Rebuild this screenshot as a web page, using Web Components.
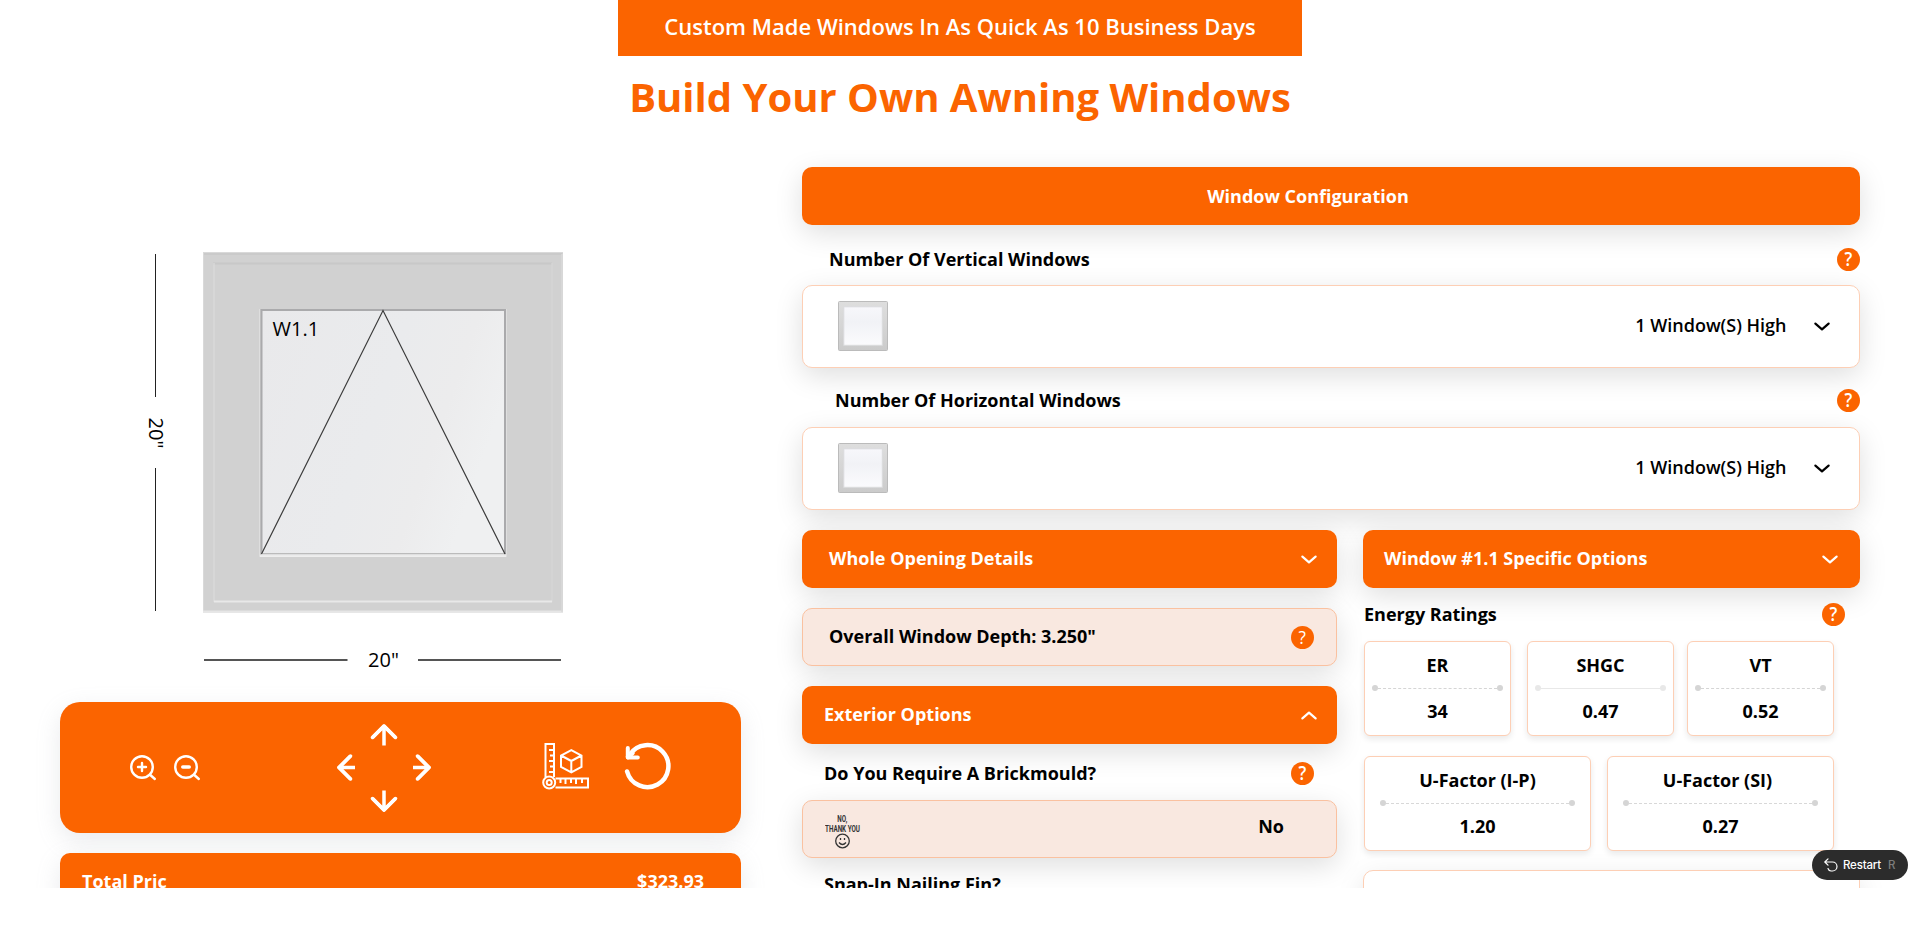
<!DOCTYPE html>
<html lang="en"><head><meta charset="utf-8"><title>Build Your Own Awning Windows</title>
<style>html,body{margin:0;background:#fff;height:930px;overflow:hidden}body{font-family:"Open Sans","Noto Sans",sans-serif}</style></head>
<body><awning-app></awning-app>
<script>
function define(name, html){
  customElements.define(name, class extends HTMLElement{
    constructor(){
      super();
      const t=document.createElement('template');
      t.innerHTML=html.replace(/\{(\w+)\}/g,(m,k)=>this.getAttribute(k)||'');
      this.attachShadow({mode:'open'}).appendChild(t.content.cloneNode(true));
    }
  });
}
define('help-dot',`<style>:host{display:flex;width:23px;height:23px;border-radius:50%;background:#fb6400;color:#fff;align-items:center;justify-content:center;font-size:19px;font-weight:600;line-height:23px;flex:none}b{font-weight:inherit;transform:scaleX(.9)}</style><b>?</b>`);
define('chevron-icon',`<style>:host{display:block;width:16px;height:9px;flex:none}:host([up]){transform:rotate(180deg)}svg{display:block}</style>
<svg width="16" height="9" fill="none" stroke="currentColor" stroke-width="2.200" stroke-linecap="round" stroke-linejoin="round"><path d="M1.4 1.600 8 7.400 14.600 1.600"/></svg>`);
define('accordion-bar',`<style>:host{display:flex;box-sizing:border-box;height:58px;border-radius:10px;background:#fb6400;color:#fff;font-weight:700;font-size:18px;line-height:24px;align-items:center;justify-content:space-between;box-shadow:0 8px 28px rgba(0,0,0,.13)}:host([center]){justify-content:center}:host([soft]){background:#f9e8e0;border:1px solid #fac1a0;color:#000}::slotted(span){padding-bottom:2px}</style><slot></slot>`);
define('window-thumb',`<style>:host{display:block;margin-bottom:1px}svg{display:block}</style><svg width="50" height="50"><defs><linearGradient id="f" x2="0" y2="1"><stop stop-color="#dedede"/><stop offset="1" stop-color="#cbcbcb"/></linearGradient><linearGradient id="g" x2="0" y2="1"><stop stop-color="#f7f7fb"/><stop offset=".4" stop-color="#f1f2f6"/><stop offset="1" stop-color="#fbfbfd"/></linearGradient></defs><rect x=".5" y=".5" width="49" height="49" rx="1" fill="url(#f)" stroke="#bbb"/><rect x="5.800" y="5.800" width="38.500" height="38.500" fill="url(#g)" stroke="#dadbdd"/></svg>`);
define('select-row',`<style>:host{display:block}.l{display:flex;justify-content:space-between;align-items:center;height:23px;font-weight:700;font-size:18px}::slotted(span){padding-bottom:2px}.b{display:flex;box-sizing:border-box;height:83px;border:1px solid #fdcfb5;border-radius:10px;background:#fff;align-items:center;padding:0 29px 0 35px;box-shadow:0 8px 28px rgba(0,0,0,.13);margin-top:var(--label-gap,14px)}.v{margin-left:auto;margin-right:27.500px;padding-bottom:3px;font-weight:600;font-size:18px;line-height:24px}</style>
<div class="l"><slot></slot><help-dot></help-dot></div><div class="b"><window-thumb></window-thumb><span class="v">1 Window(S) High</span><chevron-icon></chevron-icon></div>`);
define('question-row',`<style>:host{display:flex;justify-content:space-between;align-items:center;height:23px;font-weight:700;font-size:18px;color:#000}::slotted(span){padding-bottom:2px}</style><slot></slot>`);
define('rating-card',`<style>:host{display:flex;flex-direction:column;box-sizing:border-box;height:95px;border:1px solid #fdcfb5;border-radius:6px;background:#fff;box-shadow:0 3px 6px rgba(0,0,0,.09);text-align:center;font-weight:700;font-size:18px;line-height:24px;padding:11px {pad}px 0}
.n{margin-bottom:8px;white-space:nowrap;padding-right:var(--name-shift,0)}.d{display:flex;align-items:center;height:6px;margin-bottom:8px}.d i{width:6px;height:6px;border-radius:50%;background:{dot}}.d b{flex:1;height:0;border-top:1px {line}}</style><div class="n">{name}</div><div class="d"><i></i><b></b><i></i></div><div><slot></slot></div>`);
define('window-preview',`<style>:host{display:block;height:702px;width:741px;margin-top:-137px}svg{display:block;font-family:"Open Sans",sans-serif}</style>
<svg width="741" height="702"><defs><linearGradient id="g" x2="1" y2=".35"><stop stop-color="#e9e9eb"/><stop offset=".55" stop-color="#eaebed"/><stop offset=".8" stop-color="#ececed"/><stop offset="1" stop-color="#eff0f1"/></linearGradient></defs>
<rect x="203" y="252" width="360" height="360.500" fill="#d1d1d1"/><path d="M203 252.500H563M203.500 252V612" fill="none" stroke="#d9d9d9"/><path d="M204 254H562" stroke="#cacaca" stroke-width="2"/><path d="M203 611.500H563" stroke="#e6e6e6" stroke-width="2"/><path d="M562 254V612" stroke="#dadada" stroke-width="1.500"/>
<path d="M213 263.500H552" stroke="#c8c8c8" stroke-width="2"/><path d="M214 263V602" stroke="#d9d9d9" stroke-width="1.500"/><path d="M552 263V602" stroke="#d5d5d5" stroke-width="1.500"/><path d="M214 601.500H552" stroke="#e8e8e8" stroke-width="2"/>
<rect x="261" y="309.500" width="244.500" height="245" fill="url(#g)"/><path d="M261.500 554V310H505V554" fill="none" stroke="#aaaaac" stroke-width="2"/><path d="M263 553.500H504" stroke="#bbb"/><path d="M259.500 309V556.500H506.500V309" fill="none" stroke="#dedede"/><path d="M260 556H506" stroke="#f3f3f3" stroke-width="1.500"/>
<path d="M261.500 554 383 310.500 505 554" fill="none" stroke="#3c3c3c" stroke-width="1.200"/><text x="272.500" y="336" font-size="20">W1.1</text>
<path d="M155.500 254V397M155.500 468V611" stroke="#222"/><path d="M204 660H347.500M418 660H561" stroke="#555" stroke-width="1.800"/>
<text x="383.500" y="667" font-size="20" text-anchor="middle">20"</text><text transform="translate(148.500 433) rotate(90)" font-size="20" text-anchor="middle">20"</text></svg>`);
define('view-toolbar',`<style>:host{display:block;height:131px;border-radius:20px;background:#fb6400;box-shadow:0 8px 24px rgba(149,157,165,.2)}svg{display:block}</style>
<svg width="681" height="131" viewBox="60 702 681 131" fill="none" stroke="#fff" stroke-linecap="round" stroke-linejoin="round">
<g stroke-width="2.400"><circle cx="142" cy="767" r="10.800"/><path d="m150.300 775 4.500 4"/><path d="M142 763v8M138 767h8"/><circle cx="186" cy="767" r="10.800"/><path d="m194.300 775 4.500 4"/><path d="M182.800 767h6.400" stroke-width="3.600"/></g>
<g stroke-width="3.500"><path d="M384 745.500V726M372.500 737.500 384 726 395.500 737.500M384 790.500V810M372.500 798.500 384 810 395.500 798.500M355 767.500H339M350.500 756 339 767.500 350.500 779M413 767.500H429M417.500 756 429 767.500 417.500 779" stroke-linecap="butt"/><path d="M372.500 737.500 384 726 395.500 737.500M372.500 798.500 384 810 395.500 798.500M350.500 756 339 767.500 350.500 779M417.500 756 429 767.500 417.500 779"/></g>
<g stroke-width="2" stroke-linejoin="miter" stroke-linecap="butt"><path d="M545.500 777V744h8.500v33M554 750h-5M554 755.500h-4M554 761h-5M554 766.500h-4M554 772h-5M555.500 778.500H588v9H555.500M560.500 779v4M565.500 779v5M571 779v4M576 779v5M582 779v4"/><circle cx="549.200" cy="782.500" r="6"/><circle cx="549.200" cy="782.500" r="2.500"/><path d="m571.300 750.200 10.200 5.300v11.500l-10.200 5.300-10.300-5.300v-11.500zM561 755.500l10.300 5.500 10.200-5.500M571.300 761v11.500"/></g>
<g stroke-width="4.500"><path d="M627.100 771.500A21 21 0 1 0 629.700 754.800"/><path d="M627.800 748v9.500h10" stroke-width="4"/><path d="m628 757 4.500-4"/></g></svg>`);
define('restart-pill',`<style>:host{position:absolute;left:1812px;top:850px;display:flex;align-items:center;width:96px;height:30px;border-radius:15px;background:#2c2c2c;color:#fff;font:500 11.500px/30px Inter,sans-serif;box-sizing:border-box;padding-left:12px}span{margin-left:5px;width:38px;letter-spacing:-.2px}em{font-style:normal;font-weight:500;color:#7d7d7d;margin-left:7px}</style>
<svg width="14" height="14" fill="none" stroke="#fff" stroke-width="1.200" stroke-linecap="round" stroke-linejoin="round"><path d="M4 .8.8 4 4 7.200M1 4h7.500a4.500 4.500 0 0 1 0 9H7A3.500 3.500 0 0 1 4 10.500"/></svg><span>Restart</span><em>R</em>`);
define('thanks-icon',`<style>:host{display:block;width:36px;height:36px;margin-top:5px}svg{display:block}</style><svg width="36" height="36" font-family="Roboto,sans-serif" font-weight="700" font-size="9.500" fill="#333"><text x="12.300" y="8" textLength="10" lengthAdjust="spacingAndGlyphs">NO,</text><text x="0" y="17.500" textLength="35" lengthAdjust="spacingAndGlyphs">THANK YOU</text><g fill="none" stroke="#333" stroke-width="1.300"><circle cx="17.500" cy="27" r="6.800"/><path d="M14 28.500q3.500 4 7 0M15.500 24v2M19.500 24v2"/></g></svg>`);
define('awning-app',`<style>
:host{display:block;position:relative;height:888px;width:1920px;overflow:hidden;color:#000}
.ban{width:684px;height:56px;margin:0 auto;background:#fb6400;color:#fff;font-weight:600;font-size:22px;line-height:53px;text-align:center}
h1{margin:0;height:81px;line-height:82px;font-size:40px;font-weight:700;color:#fb6400;text-align:center}
.cols{display:grid;grid-template-columns:802px 1058px}
view-toolbar,.total{width:681px;margin-left:60px}
.total{display:flex;box-sizing:border-box;margin-top:20px;height:58px;border-radius:10px;background:#fb6400;color:#fff;font-weight:700;font-size:18px;line-height:56px;justify-content:space-between;padding:0 37px 0 22px;box-shadow:0 8px 24px rgba(149,157,165,.2)}
.r{padding-top:30px}select-row{margin-top:23px}select-row+select-row{margin-top:21px;--label-gap:15px}
.two{display:grid;grid-template-columns:535px 497px;column-gap:26px;margin-top:20px}
accordion-bar{padding:0 20px 0 27px}.e{padding-left:22px}.mt{margin-top:20px}
.dep{padding:0 22px 0 26px}.q{padding:0 23px 0 22px;margin-top:18px}.no+.q{margin-top:15px}
.no{margin-top:15px;padding:0 52px 0 22px}.no span{margin-top:-4px}
.er{padding:0 15px 0 1px;margin-top:15px}.g{display:flex;padding-left:1px;margin-top:15px}
.g rating-card{width:147px}.g rating-card:nth-child(2){margin:0 13px 0 16px}.h{display:flex;gap:16px;padding-left:1px;margin-top:20px}.h rating-card{width:227px}
.last{box-sizing:border-box;margin-top:19px;height:60px;border:1px solid #fdcfb5;border-radius:10px;background:#fff;box-shadow:0 8px 28px rgba(0,0,0,.1)}
</style>
<div class="ban">Custom Made Windows In As Quick As 10 Business Days</div><h1>Build Your Own Awning Windows</h1>
<div class="cols"><div><window-preview></window-preview><view-toolbar></view-toolbar><div class="total"><span>Total Pric</span><span>$323.93</span></div></div>
<div class="r"><accordion-bar center style="padding:0 46px 0 0">Window Configuration</accordion-bar>
<select-row><span style="padding-left:27px">Number Of Vertical Windows</span></select-row>
<select-row><span style="padding-left:33px">Number Of Horizontal Windows</span></select-row>
<div class="two"><div><accordion-bar><span>Whole Opening Details</span><chevron-icon></chevron-icon></accordion-bar>
<accordion-bar soft class="mt dep"><span>Overall Window Depth: 3.250"</span><help-dot style="font-weight:400"></help-dot></accordion-bar>
<accordion-bar class="mt e"><span>Exterior Options</span><chevron-icon up></chevron-icon></accordion-bar>
<question-row class="q"><span>Do You Require A Brickmould?</span><help-dot></help-dot></question-row>
<accordion-bar soft class="no"><thanks-icon></thanks-icon><span>No</span></accordion-bar>
<question-row class="q"><span>Snap-In Nailing Fin?</span></question-row></div>
<div><accordion-bar style="padding:0 22px 0 21px"><span>Window #1.1 Specific Options</span><chevron-icon></chevron-icon></accordion-bar>
<question-row class="er"><span>Energy Ratings</span><help-dot></help-dot></question-row>
<div class="g"><rating-card name="ER" pad="7" dot="#d5d5d5" line="dashed #d5d5d5">34</rating-card><rating-card name="SHGC" pad="7" dot="#e8e8e8" line="solid #e8e8e8">0.47</rating-card><rating-card name="VT" pad="7" dot="#d5d5d5" line="dashed #d5d5d5">0.52</rating-card></div>
<div class="h"><rating-card name="U-Factor (I-P)" pad="15" dot="#d5d5d5" line="dashed #d8d8d8">1.20</rating-card><rating-card style="--name-shift:6px" name="U-Factor (SI)" pad="15" dot="#d5d5d5" line="dashed #d8d8d8">0.27</rating-card></div><div class="last"></div></div></div></div></div>
<restart-pill></restart-pill>`);
</script></body></html>
